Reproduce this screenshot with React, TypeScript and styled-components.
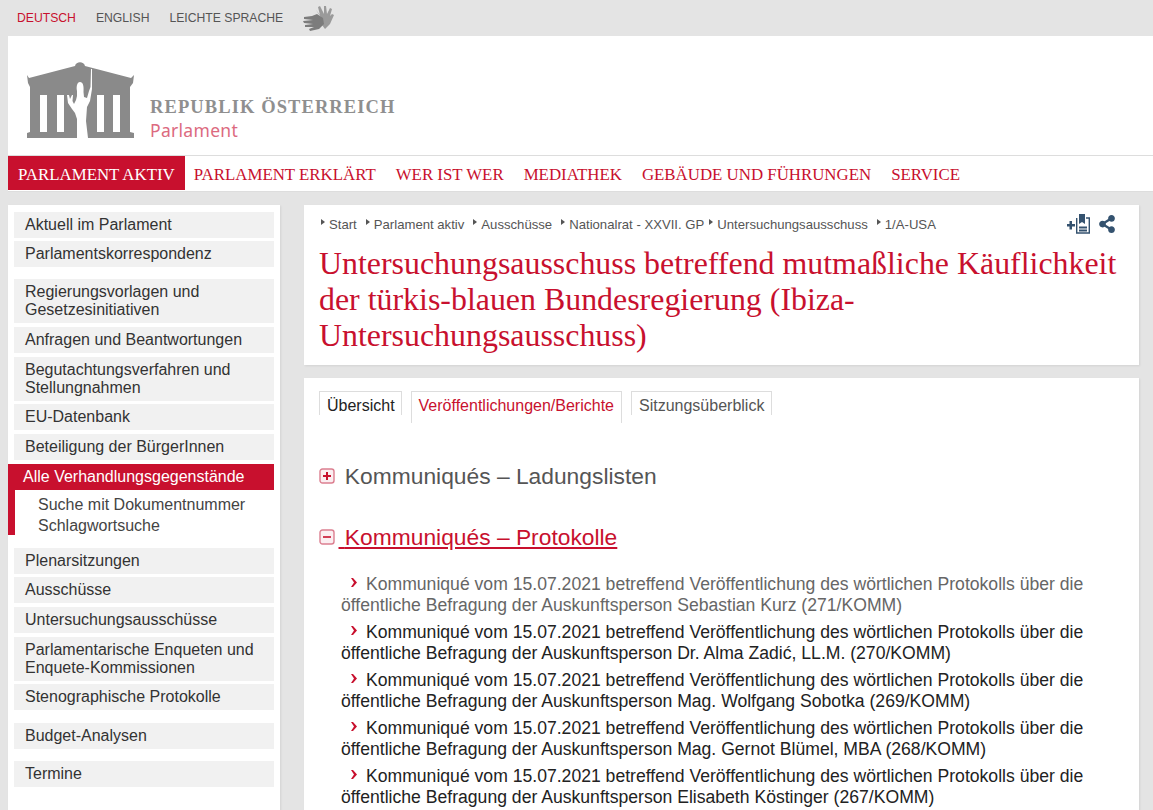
import styled, { createGlobalStyle } from "styled-components";
import { FaShareAlt } from "react-icons/fa";

const GlobalStyle = createGlobalStyle`
  html, body {
    margin: 0;
    padding: 0;
    height: 810px;
    overflow: hidden;
    background: #e4e4e4;
    font-family: "Liberation Sans", Arial, sans-serif;
    color: #333;
  }
  * {
    box-sizing: border-box;
  }
`;

const languages = [
  { label: "DEUTSCH", active: true },
  { label: "ENGLISH", active: false },
  { label: "LEICHTE SPRACHE", active: false },
];

const mainNav = [
  "PARLAMENT AKTIV",
  "PARLAMENT ERKLÄRT",
  "WER IST WER",
  "MEDIATHEK",
  "GEBÄUDE UND FÜHRUNGEN",
  "SERVICE",
];

const crumbs = [
  "Start",
  "Parlament aktiv",
  "Ausschüsse",
  "Nationalrat - XXVII. GP",
  "Untersuchungsausschuss",
  "1/A-USA",
];

const people = [
  { name: "Sebastian Kurz", no: 271, visited: true },
  { name: "Dr. Alma Zadić, LL.M.", no: 270, visited: false },
  { name: "Mag. Wolfgang Sobotka", no: 269, visited: false },
  { name: "Mag. Gernot Blümel, MBA", no: 268, visited: false },
  { name: "Elisabeth Köstinger", no: 267, visited: false },
];

function TempleLogo() {
  return (
    <svg width="108" height="77" viewBox="0 0 108 77">
      <path
        fill="#8a8a8a"
        d="M0 14 L2 17 L48 5 C49 0 57 0 58 5 L104 17 L107 14 L106 22 L103 26 V71 L107 72 V77 H0 V72 L3 71 V26 L1 22 Z"
      />
      <path fill="#fff" d="M13 34 H20 V71 H13 Z M30 34 H37 V71 H30 Z M70 34 H77 V71 H70 Z M86 34 H93 V71 H86 Z" />
      <path
        fill="#fff"
        d="M50 77 L50 58 L48 52 L45 48 L41 42 L40 34 L42 34 L43 38 L45 34 L46 34 L45.5 40 L47 43 L49 39 L50 35 L50 30 C49 26 50 21 53 21 C56 21 57 25 56.5 31 L57 36 L60 37 L62 30 L63.5 26 L64 8 L65 8 L65 28 L63 40 L60 46 L59 60 L61 77 Z"
      />
    </svg>
  );
}

function HandsIcon() {
  return (
    <svg width="31" height="26" viewBox="0 0 31 26">
      <path
        fill="#9a9a9a"
        d="M13 5 L17 10 L15 2 L17 1 L21 9 L21 1 L23 1 L24 9 L27 3 L29 4 L27 11 L29 9 L31 10 L27 19 L22 24 L19 20 L19 14 Z"
      />
      <path
        fill="#7c7c7c"
        d="M1 12 L9 11 L14 9 L20 13 L21 19 L16 24 L7 26 L6 24 L11 22 L2 22 L2 20 L10 19 L1 18 L0 16 L10 15 L1 14 Z"
      />
    </svg>
  );
}

function WatchlistIcon() {
  return (
    <svg width="24" height="20" viewBox="0 0 24 20">
      <path fill="#34526f" d="M1 10 H3.5 V7 H6 V10 H9 V12.5 H6 V15.5 H3.5 V12.5 H1 Z" />
      <path fill="none" stroke="#34526f" strokeWidth="1.4" d="M10.7 4 V19 H23.3 V4 H20" />
      <path fill="#34526f" d="M13 0 H19 V10 L16 8 L13 10 Z M13 12.5 H21 V14.5 H13 Z M13 15.5 H21 V17.5 H13 Z" />
    </svg>
  );
}

function ToggleIcon({ open }: { open: boolean }) {
  return (
    <svg width="16" height="16" viewBox="0 0 16 16">
      <rect x="1" y="1" width="14" height="14" rx="2.5" fill="#fbeef1" stroke="#dc7f90" strokeWidth="1.4" />
      {open ? (
        <path fill="#c8102e" d="M4 7 H12 V9 H4 Z" opacity="0.8" />
      ) : (
        <path fill="#c8102e" d="M4 7 H7 V4 H9 V7 H12 V9 H9 V12 H7 V9 H4 Z" />
      )}
    </svg>
  );
}

export default function App() {
  return (
    <>
      <GlobalStyle />
      <TopBar>
        {languages.map((l) => (
          <LangLink key={l.label} $active={l.active}>
            {l.label}
          </LangLink>
        ))}
        <HandsWrap>
          <HandsIcon />
        </HandsWrap>
      </TopBar>
      <Page>
        <Header>
          <TempleLogo />
          <Wordmark>
            <WordTop>REPUBLIK ÖSTERREICH</WordTop>
            <WordBottom>Parlament</WordBottom>
          </Wordmark>
        </Header>
        <MainNav>
          {mainNav.map((n, i) => (
            <NavItem key={n} $active={i === 0}>
              {n}
            </NavItem>
          ))}
        </MainNav>
        <Columns>
          <Sidebar>
            <TopGroup>
              <SideItem>Aktuell im Parlament</SideItem>
              <SideItem>Parlamentskorrespondenz</SideItem>
            </TopGroup>
            <SideGroup>
              <SideItem>Regierungsvorlagen und Gesetzesinitiativen</SideItem>
              <SideItem>Anfragen und Beantwortungen</SideItem>
              <SideItem>Begutachtungsverfahren und Stellungnahmen</SideItem>
              <SideItem>EU-Datenbank</SideItem>
              <SideItem>Beteiligung der BürgerInnen</SideItem>
              <ActiveBlock>
                <ActiveItem>Alle Verhandlungsgegenstände</ActiveItem>
                <SubList>
                  <SubItem>Suche mit Dokumentnummer</SubItem>
                  <SubItem>Schlagwortsuche</SubItem>
                </SubList>
              </ActiveBlock>
              <SideItem>Plenarsitzungen</SideItem>
              <SideItem>Ausschüsse</SideItem>
              <SideItem>Untersuchungsausschüsse</SideItem>
              <SideItem>Parlamentarische Enqueten und Enquete-Kommissionen</SideItem>
              <SideItem>Stenographische Protokolle</SideItem>
            </SideGroup>
            <BudgetGroup>
              <SideItem>Budget-Analysen</SideItem>
            </BudgetGroup>
            <SideGroup>
              <SideItem>Termine</SideItem>
            </SideGroup>
          </Sidebar>
          <Main>
            <TitleCard>
              <CrumbRow>
                <Crumbs>
                  {crumbs.map((c) => (
                    <Crumb key={c}>{c}</Crumb>
                  ))}
                </Crumbs>
                <Tools>
                  <WatchlistIcon />
                  <FaShareAlt size={18} color="#34526f" />
                </Tools>
              </CrumbRow>
              <Title>
                Untersuchungsausschuss betreffend mutmaßliche Käuflichkeit der türkis-blauen
                Bundesregierung (Ibiza-Untersuchungsausschuss)
              </Title>
            </TitleCard>
            <ContentCard>
              <Tabs>
                <Tab>Übersicht</Tab>
                <Tab $active>Veröffentlichungen/Berichte</Tab>
                <Tab $muted>Sitzungsüberblick</Tab>
              </Tabs>
              <Section>
                <ToggleIcon open={false} />
                <SectionTitle>{"\u00a0"}Kommuniqués – Ladungslisten</SectionTitle>
              </Section>
              <Section $open>
                <ToggleIcon open />
                <SectionTitle $open>{"\u00a0"}Kommuniqués – Protokolle</SectionTitle>
              </Section>
              <DocList>
                {people.map((p) => (
                  <DocItem key={p.no} $visited={p.visited}>
                    <Chevron viewBox="0 0 6 9">
                      <path fill="#c8102e" d="M0 0 H2 L6 4.5 L2 9 H0 L3 4.5 Z" />
                    </Chevron>
                    Kommuniqué vom 15.07.2021 betreffend Veröffentlichung des wörtlichen Protokolls
                    über die öffentliche Befragung der Auskunftsperson {p.name} ({p.no}/KOMM)
                  </DocItem>
                ))}
              </DocList>
            </ContentCard>
          </Main>
        </Columns>
      </Page>
    </>
  );
}

const TopBar = styled.div`
  display: flex;
  align-items: center;
  height: 36px;
  padding-left: 17px;
  gap: 20px;
`;
const LangLink = styled.a<{ $active: boolean }>`
  font-size: 12.2px;
  color: ${(p) => (p.$active ? "#c8102e" : "#555")};
`;
const HandsWrap = styled.span`
  display: flex;
  margin: 0 0 1px 0;
`;
const Page = styled.div`
  margin-left: 8px;
`;
const Header = styled.header`
  display: flex;
  align-items: flex-end;
  height: 119px;
  padding: 0 0 17px 19px;
  background: #fff;
  gap: 15px;
`;
const Wordmark = styled.div`
  display: flex;
  flex-direction: column;
  margin-bottom: -4px;
`;
const WordTop = styled.div`
  font-family: "Liberation Serif", serif;
  font-weight: 700;
  font-size: 18.5px;
  letter-spacing: 1.1px;
  line-height: 22px;
  color: #8f8f8f;
`;
const WordBottom = styled.div`
  font-family: "Noto Sans", sans-serif;
  font-size: 17.5px;
  letter-spacing: 0.3px;
  line-height: 24px;
  color: #dc6a80;
`;
const MainNav = styled.nav`
  display: flex;
  height: 37px;
  background: #fff;
  border-top: 1px solid #ddd;
  border-bottom: 1px solid #ddd;
`;
const NavItem = styled.a<{ $active: boolean }>`
  display: flex;
  align-items: center;
  height: 34px;
  margin-right: ${(p) => (p.$active ? "-1px" : "0")};
  padding: 3px 10px 0;
  font-family: "Liberation Serif", serif;
  font-size: 16.85px;
  background: ${(p) => (p.$active ? "#c8102e" : "transparent")};
  color: ${(p) => (p.$active ? "#fff" : "#c8102e")};
`;
const Columns = styled.div`
  display: flex;
  align-items: flex-start;
  gap: 24px;
  padding-top: 13px;
`;
const Sidebar = styled.aside`
  display: flex;
  flex-direction: column;
  gap: 12px;
  width: 272px;
  height: 620px;
  padding: 7px 6px 0 0;
  background: #fff;
  box-shadow: 1px 1px 2px rgba(0, 0, 0, 0.08);
`;
const SideGroup = styled.div`
  display: flex;
  flex-direction: column;
  gap: 3.7px;
`;
const TopGroup = styled(SideGroup)`
  gap: 3.4px;
  margin-bottom: -0.2px;
`;
const BudgetGroup = styled(SideGroup)`
  margin-top: 0.6px;
`;
const SideItem = styled.a`
  display: block;
  margin-left: 6px;
  padding: 4px 11px;
  font-size: 16px;
  line-height: 18px;
  background: #f1f1f1;
  color: #333;
`;
const ActiveBlock = styled.div`
  margin-bottom: 9.2px;
`;
const ActiveItem = styled.div`
  padding: 4px 15px;
  font-size: 16px;
  line-height: 18px;
  background: #c8102e;
  color: #fff;
`;
const SubList = styled.div`
  height: 45px;
  padding: 4px 0 0 23px;
  border-left: 7px solid #c8102e;
`;
const SubItem = styled.div`
  font-size: 16px;
  line-height: 21px;
  color: #444;
`;
const Main = styled.main`
  display: flex;
  flex-direction: column;
  gap: 13px;
  width: 835px;
`;
const TitleCard = styled.section`
  height: 160px;
  padding: 7px 15px;
  background: #fff;
  box-shadow: 1px 1px 2px rgba(0, 0, 0, 0.08);
`;
const CrumbRow = styled.div`
  display: flex;
  justify-content: space-between;
  align-items: center;
  height: 24px;
`;
const Crumbs = styled.div`
  display: flex;
  gap: 9px;
  margin-left: 2px;
`;
const Crumb = styled.a`
  position: relative;
  padding-left: 8px;
  font-size: 13.15px;
  color: #555;
  &:nth-child(4) {
    margin-right: -4px;
  }
  &::before {
    content: "";
    position: absolute;
    left: 0;
    top: 2px;
    border-left: 4px solid #555;
    border-top: 3px solid transparent;
    border-bottom: 3px solid transparent;
  }
`;
const Tools = styled.div`
  display: flex;
  align-items: center;
  gap: 8px;
  margin-right: 8px;
`;
const Title = styled.h1`
  margin: 10px 0 0;
  font-family: "Liberation Serif", serif;
  font-weight: 400;
  font-size: 31.9px;
  line-height: 36px;
  color: #c8102e;
`;
const ContentCard = styled.section`
  height: 440px;
  padding: 13px 15px 0;
  background: #fff;
  box-shadow: 1px 1px 2px rgba(0, 0, 0, 0.08);
`;
const Tabs = styled.div`
  display: flex;
  align-items: flex-start;
  gap: 9px;
  margin-bottom: 39px;
`;
const Tab = styled.a<{ $active?: boolean; $muted?: boolean }>`
  height: ${(p) => (p.$active ? "32px" : "24px")};
  padding: 5px 7px 0;
  border: 1px solid #ddd;
  border-bottom: 0;
  font-size: 16px;
  line-height: 18px;
  color: ${(p) => (p.$active ? "#c8102e" : p.$muted ? "#555" : "#222")};
  &:first-child {
    padding-right: 6px;
  }
`;
const Section = styled.div<{ $open?: boolean }>`
  display: flex;
  align-items: center;
  gap: 3.5px;
  height: 28px;
  margin-bottom: ${(p) => (p.$open ? "23px" : "33px")};
`;
const SectionTitle = styled.h2<{ $open?: boolean }>`
  margin: 0;
  font-weight: 400;
  font-size: 22.8px;
  line-height: 28px;
  color: ${(p) => (p.$open ? "#c8102e" : "#555")};
  text-decoration: ${(p) => (p.$open ? "underline" : "none")};
`;
const DocList = styled.div`
  display: flex;
  flex-direction: column;
  gap: 6px;
  padding-left: 22px;
  width: 790px;
`;
const DocItem = styled.div<{ $visited: boolean }>`
  font-size: 17.6px;
  line-height: 21px;
  text-indent: 10px;
  color: ${(p) => (p.$visited ? "#666" : "#222")};
`;
const Chevron = styled.svg`
  display: inline-block;
  width: 6px;
  height: 9px;
  margin-right: 9px;
  vertical-align: 3px;
`;
